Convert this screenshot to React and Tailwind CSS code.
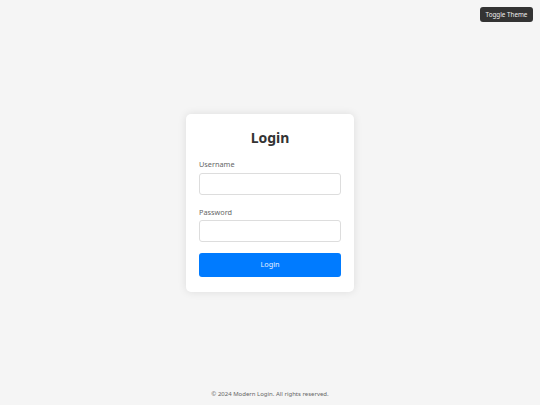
import { useState } from "react";

export default function App() {
  const [username, setUsername] = useState("");
  const [password, setPassword] = useState("");

  return (
    <div
      className="relative min-h-screen h-[405px] bg-[#f5f5f5] flex flex-col items-center justify-center"
      style={{ fontFamily: '"Noto Sans", "DejaVu Sans", sans-serif' }}
    >
      {/* Theme toggle */}
      <button className="absolute top-[7px] right-[7px] w-[53px] h-[15px] rounded-[3px] bg-[#333] text-[#eee] text-[6.3px] leading-[15px]">
        Toggle Theme
      </button>

      {/* Card */}
      <div className="w-[168px] bg-white rounded-[5px] shadow-[0_0_8px_rgba(0,0,0,0.1)] px-[13px] pt-[14px] pb-[15px]">
        <h1 className="text-center text-[14px] leading-[19px] font-bold text-[#333] mb-[12px]">
          Login
        </h1>

        <label className="block text-[7.3px] leading-[10px] text-[#666] mb-[4px]">
          Username
        </label>
        <input
          type="text"
          value={username}
          onChange={(e) => setUsername(e.target.value)}
          className="block w-full h-[22px] border border-[#ddd] rounded-[3px] bg-white mb-[12px] outline-none"
        />

        <label className="block text-[7.3px] leading-[10px] text-[#666] mb-[3px]">
          Password
        </label>
        <input
          type="password"
          value={password}
          onChange={(e) => setPassword(e.target.value)}
          className="block w-full h-[22px] border border-[#ddd] rounded-[3px] bg-white mb-[11px] outline-none"
        />

        <button className="block w-full h-[24px] rounded-[3px] bg-[#007bff] text-[#e6f0ff] text-[7.3px]">
          Login
        </button>
      </div>

      {/* Footer */}
      <footer className="absolute bottom-[7px] left-0 right-0 text-center text-[6px] leading-[8px] text-[#666]">
        © 2024 Modern Login. All rights reserved.
      </footer>
    </div>
  );
}
